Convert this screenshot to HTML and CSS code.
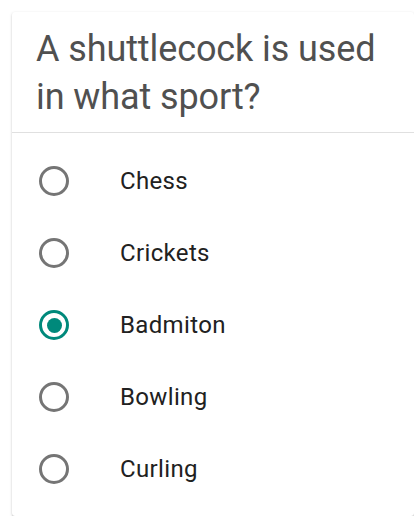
FILE: index.html
```html
<!DOCTYPE html>
<html lang="en">
<head>
<meta charset="utf-8">
<title>Quiz</title>
<link rel="stylesheet" href="styles.css">
</head>
<body>
<div class="card">
  <h1 class="question">A shuttlecock is used in what sport?</h1>
  <div class="divider"></div>
  <ul class="options">
    <li class="option"><span class="radio"></span><span class="label">Chess</span></li>
    <li class="option"><span class="radio"></span><span class="label">Crickets</span></li>
    <li class="option"><span class="radio checked"></span><span class="label">Badmiton</span></li>
    <li class="option"><span class="radio"></span><span class="label">Bowling</span></li>
    <li class="option"><span class="radio"></span><span class="label">Curling</span></li>
  </ul>
</div>
</body>
</html>
```

FILE: styles.css
```css
html, body {
  margin: 0;
  padding: 0;
  background: #ffffff;
  overflow: hidden;
}
body {
  font-family: Roboto, "Liberation Sans", sans-serif;
  padding: 12px 0 0 12px;
}
.card {
  width: 402px;
  height: 504px;
  box-sizing: border-box;
  background: #ffffff;
  border-radius: 3px;
  box-shadow: 0 1px 3px rgba(0,0,0,0.18), 0 1px 1px rgba(0,0,0,0.12);
  display: flex;
  flex-direction: column;
}
.question {
  margin: 0;
  padding: 13px 24px 11px 24px;
  font-size: 36px;
  line-height: 48px;
  font-weight: 400;
  letter-spacing: -0.1px;
  color: #505050;
}
.divider {
  height: 1px;
  background: #e0e0e0;
}
.options {
  list-style: none;
  margin: 0;
  padding: 12px 0 0 0;
}
.option {
  height: 72px;
  display: flex;
  align-items: center;
  padding-left: 27px;
}
.radio {
  width: 30px;
  height: 30px;
  box-sizing: border-box;
  border: 3px solid #757575;
  border-radius: 50%;
  flex: none;
  display: flex;
  align-items: center;
  justify-content: center;
}
.radio.checked {
  border-color: #00897b;
}
.radio.checked::after {
  content: "";
  width: 15px;
  height: 15px;
  border-radius: 50%;
  background: #00897b;
}
.label {
  margin-left: 51px;
  font-size: 24px;
  letter-spacing: 0.35px;
  color: #212121;
}
```
